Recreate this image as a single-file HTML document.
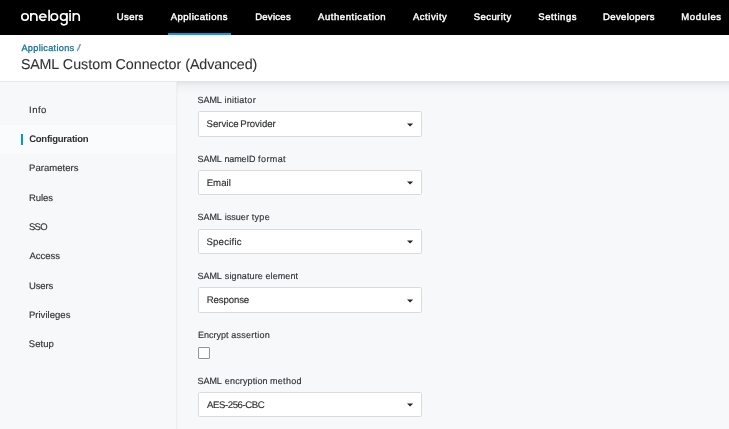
<!DOCTYPE html>
<html>
<head>
<meta charset="utf-8">
<title>SAML Custom Connector (Advanced)</title>
<style>
  html, body { margin: 0; padding: 0; }
  body {
    width: 729px; height: 429px; overflow: hidden; position: relative;
    background: #f7f8fa;
    font-family: "Liberation Sans", sans-serif;
    color: #2b2f33;
  }
  .t { position: absolute; white-space: nowrap; line-height: 20px; height: 20px; will-change: transform; text-rendering: geometricPrecision; z-index: 5; }
  .lg { color: #fff; -webkit-text-stroke: 0.3px #fff; }
  .nv { color: #fff; -webkit-text-stroke: 0.42px #fff; }
  .cr { color: #13729a; -webkit-text-stroke: 0.28px #13729a; }
  .tt { color: #2f3133; -webkit-text-stroke: 0.08px #2f3133; }
  .sd { color: #303336; -webkit-text-stroke: 0.15px #303336; }
  .sb { color: #2d2f31; font-weight: bold; }
  .lb { color: #2e3134; -webkit-text-stroke: 0.15px #2e3134; }
  .vl { color: #2c2f32; -webkit-text-stroke: 0.15px #2c2f32; }

  #nav { position: absolute; left: 0; top: 0; width: 729px; height: 35px; background: #000; }
  #ul  { position: absolute; left: 168px; top: 33px; width: 63px; height: 2px; background: #00a0e0; }
  #header { position: absolute; left: 0; top: 35px; width: 729px; height: 46px; background: #fff; }

  #side { position: absolute; left: 0; top: 81px; width: 176px; height: 348px; background: #f7f8f9; }
  #sideline { position: absolute; left: 0; top: 81px; width: 176px; height: 1px; background: #e7e9eb; }
  #sideborder { position: absolute; left: 176px; top: 81px; width: 1px; height: 348px; background: #eceef0; }
  #sel { position: absolute; left: 0; top: 125px; width: 176px; height: 29px; background: #fafbfc; }
  #bar { position: absolute; left: 21px; top: 134px; width: 2px; height: 11px; background: #0099d8; }

  #shadow { position: absolute; left: 177px; top: 81px; width: 552px; height: 13px;
            background: linear-gradient(to bottom, rgba(10,40,40,0.10) 0%, rgba(10,40,40,0.07) 17%, rgba(10,40,40,0.04) 35%, rgba(10,40,40,0.022) 52%, rgba(10,40,40,0.01) 72%, rgba(10,40,40,0) 100%); }
  #lshadow { position: absolute; left: 177px; top: 81px; width: 2px; height: 348px;
            background: linear-gradient(to right, rgba(0,0,0,0.025), rgba(0,0,0,0)); }

  .box { position: absolute; left: 198px; width: 224px; box-sizing: border-box; background: #fff; border: 1px solid #d9dbdc; border-radius: 1.5px; }
  #chk { position: absolute; left: 198px; top: 347px; width: 12px; height: 12px; box-sizing: border-box; background: #fff; border: 1px solid #8f9393; border-radius: 1px; box-shadow: 0 0 0 1px rgba(255,255,255,0.55); }
</style>
</head>
<body>
<div id="nav"></div><div id="ul"></div>
<svg id="logo" width="90" height="35" viewBox="0 0 90 35" style="position:absolute;left:0;top:0;z-index:6" fill="none" stroke="#fff" stroke-width="1.65">
<circle cx="25" cy="17" r="3.22"/>
<path d="M30.87 12.9V20.9M30.87 16.72A3 3 0 0 1 36.88 16.72V20.9"/>
<path d="M39.4 17H46A3.22 3.22 0 1 0 45.35 19.15"/>
<path d="M49.1 9.85V20.9"/>
<circle cx="54.33" cy="17" r="3.25"/>
<circle cx="63.7" cy="17" r="3.22"/>
<path d="M66.93 12.9V21.3A3 3 0 0 1 61.1 22.7"/>
<path d="M70.05 12.9V20.9M70.05 10.1V11.9"/>
<path d="M73.32 12.9V20.9M73.32 16.72A2.95 2.95 0 0 1 79.23 16.72V20.9"/>
</svg>
<div id="header"></div>
<div id="side"></div><div id="sideline"></div><div id="sel"></div><div id="bar"></div><div id="sideborder"></div>
<div id="shadow"></div><div id="lshadow"></div>
<div class="box" style="top:111px;height:26px"></div>
<div class="box" style="top:170px;height:25px"></div>
<div class="box" style="top:229px;height:25px"></div>
<div class="box" style="top:287px;height:26px"></div>
<div class="box" style="top:392px;height:25px"></div>
<div id="chk"></div>
<svg class="arr" width="729" height="429" viewBox="0 0 729 429" style="position:absolute;left:0;top:0;z-index:4" fill="#24272a"><polygon points="407,123.40 413.2,123.40 410.1,126.50"/><polygon points="407,181.45 413.2,181.45 410.1,184.55"/><polygon points="407,240.45 413.2,240.45 410.1,243.55"/><polygon points="407,299.40 413.2,299.40 410.1,302.50"/><polygon points="407,403.45 413.2,403.45 410.1,406.55"/></svg>
<div class="t nv" style="left:116px;top:8px;font-size:9.5px;letter-spacing:0.459px;transform:translateX(0.72px);">Users</div>
<div class="t nv" style="left:170px;top:8px;font-size:9.5px;letter-spacing:0.512px;transform:translateX(0.68px);">Applications</div>
<div class="t nv" style="left:255px;top:8px;font-size:9.5px;letter-spacing:0.278px;transform:translateX(0.17px);">Devices</div>
<div class="t nv" style="left:317px;top:8px;font-size:9.5px;letter-spacing:0.563px;transform:translateX(0.99px);">Authentication</div>
<div class="t nv" style="left:412px;top:8px;font-size:9.5px;letter-spacing:0.553px;transform:translateX(0.91px);">Activity</div>
<div class="t nv" style="left:473px;top:8px;font-size:9.5px;letter-spacing:0.456px;transform:translateX(0.64px);">Security</div>
<div class="t nv" style="left:538px;top:8px;font-size:9.5px;letter-spacing:0.559px;transform:translateX(0.25px);">Settings</div>
<div class="t nv" style="left:602px;top:8px;font-size:9.5px;letter-spacing:0.399px;transform:translateX(0.94px);">Developers</div>
<div class="t nv" style="left:681px;top:8px;font-size:9.5px;letter-spacing:0.662px;transform:translateX(0.22px);">Modules</div>
<div class="t cr" style="left:21px;top:38px;font-size:9.2px;letter-spacing:0.297px;transform:translateX(0.39px);">Applications</div>
<div class="t cr" style="left:77px;top:38px;font-size:9.2px;letter-spacing:0.000px;transform:translateX(0.53px) skewX(-8deg);">/</div>
<div class="t tt" style="left:20px;top:55px;font-size:14.3px;letter-spacing:-0.187px;transform:translateX(0.88px);">SAML</div>
<div class="t tt" style="left:62px;top:55px;font-size:14.3px;letter-spacing:0.020px;transform:translateX(0.80px);">Custom</div>
<div class="t tt" style="left:115px;top:55px;font-size:14.3px;letter-spacing:-0.035px;transform:translateX(0.52px);">Connector</div>
<div class="t tt" style="left:185px;top:55px;font-size:14.3px;letter-spacing:-0.131px;transform:translateX(0.29px);">(Advanced)</div>
<div class="t sd" style="left:29px;top:101px;font-size:9.5px;letter-spacing:0.486px;transform:translateX(0.06px);">Info</div>
<div class="t sb" style="left:29px;top:130px;font-size:9.5px;letter-spacing:-0.236px;transform:translateX(0.15px);">Configuration</div>
<div class="t sd" style="left:29px;top:159px;font-size:9.5px;letter-spacing:0.032px;transform:translateX(0.02px);">Parameters</div>
<div class="t sd" style="left:28px;top:189px;font-size:9.5px;letter-spacing:-0.069px;transform:translateX(0.93px);">Rules</div>
<div class="t sd" style="left:28px;top:218px;font-size:9.5px;letter-spacing:-0.643px;transform:translateX(0.88px);">SSO</div>
<div class="t sd" style="left:29px;top:247px;font-size:9.5px;letter-spacing:-0.014px;transform:translateX(0.38px);">Access</div>
<div class="t sd" style="left:28px;top:277px;font-size:9.5px;letter-spacing:-0.097px;transform:translateX(0.92px);">Users</div>
<div class="t sd" style="left:28px;top:306px;font-size:9.5px;letter-spacing:0.039px;transform:translateX(0.88px);">Privileges</div>
<div class="t sd" style="left:28px;top:335px;font-size:9.5px;letter-spacing:0.064px;transform:translateX(0.79px);">Setup</div>
<div class="t lb" style="left:197px;top:90px;font-size:9px;letter-spacing:-0.071px;transform:translateX(0.54px);">SAML</div>
<div class="t lb" style="left:224px;top:90px;font-size:9px;letter-spacing:0.282px;transform:translateX(0.39px);">initiator</div>
<div class="t lb" style="left:197px;top:149px;font-size:9px;letter-spacing:-0.071px;transform:translateX(0.54px);">SAML</div>
<div class="t lb" style="left:224px;top:149px;font-size:9px;letter-spacing:-0.104px;transform:translateX(0.41px);">nameID</div>
<div class="t lb" style="left:258px;top:149px;font-size:9px;letter-spacing:0.398px;transform:translateX(0.10px);">format</div>
<div class="t lb" style="left:197px;top:207px;font-size:9px;letter-spacing:-0.071px;transform:translateX(0.54px);">SAML</div>
<div class="t lb" style="left:224px;top:207px;font-size:9px;letter-spacing:0.050px;transform:translateX(0.63px);">issuer</div>
<div class="t lb" style="left:251px;top:207px;font-size:9px;letter-spacing:0.350px;transform:translateX(0.64px);">type</div>
<div class="t lb" style="left:197px;top:266px;font-size:9px;letter-spacing:-0.071px;transform:translateX(0.54px);">SAML</div>
<div class="t lb" style="left:224px;top:266px;font-size:9px;letter-spacing:0.120px;transform:translateX(0.81px);">signature</div>
<div class="t lb" style="left:265px;top:266px;font-size:9px;letter-spacing:0.086px;transform:translateX(0.48px);">element</div>
<div class="t lb" style="left:197px;top:325px;font-size:9px;letter-spacing:0.006px;transform:translateX(0.96px);">Encrypt</div>
<div class="t lb" style="left:231px;top:325px;font-size:9px;letter-spacing:0.258px;transform:translateX(0.28px);">assertion</div>
<div class="t lb" style="left:197px;top:371px;font-size:9px;letter-spacing:-0.071px;transform:translateX(0.54px);">SAML</div>
<div class="t lb" style="left:224px;top:371px;font-size:9px;letter-spacing:0.133px;transform:translateX(0.87px);">encryption</div>
<div class="t lb" style="left:269px;top:371px;font-size:9px;letter-spacing:0.336px;transform:translateX(0.90px);">method</div>
<div class="t vl" style="left:206px;top:115px;font-size:9.6px;letter-spacing:0.015px;transform:translateX(0.54px);">Service</div>
<div class="t vl" style="left:240px;top:115px;font-size:9.6px;letter-spacing:-0.043px;transform:translateX(0.28px);">Provider</div>
<div class="t vl" style="left:206px;top:174px;font-size:9.6px;letter-spacing:0.031px;transform:translateX(0.68px);">Email</div>
<div class="t vl" style="left:206px;top:233px;font-size:9.6px;letter-spacing:0.223px;transform:translateX(0.44px);">Specific</div>
<div class="t vl" style="left:206px;top:291px;font-size:9.6px;letter-spacing:-0.099px;transform:translateX(0.66px);">Response</div>
<div class="t vl" style="left:207px;top:396px;font-size:9.6px;letter-spacing:-0.414px;transform:translateX(0.02px);">AES-256-CBC</div>
</body>
</html>
